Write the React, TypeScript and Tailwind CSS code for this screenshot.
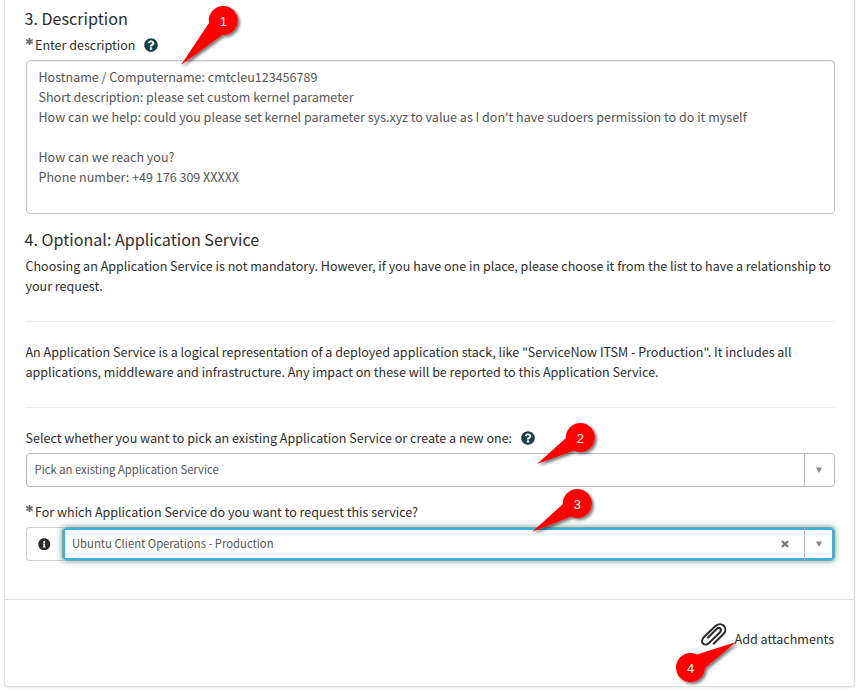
import React from "react";
import { FaAsterisk, FaQuestionCircle, FaInfoCircle } from "react-icons/fa";

function Required() {
  return <FaAsterisk className="-mt-[7px] mr-[2px] size-[7px] shrink-0 stroke-[#666] stroke-[40px] text-[#666]" />;
}

function Help() {
  return <FaQuestionCircle className="-mt-px ml-[8.5px] size-[14px] text-[#17414a]" />;
}

function Caret() {
  return (
    <svg className="-ml-px h-[6px] w-[6px]" viewBox="0 0 6 6">
      <path d="M0 0.5H6L3.4 5.5H2.6Z" fill="#888" />
    </svg>
  );
}

type CalloutProps = { n: string; cx: number; cy: number; tip: string };

function Callout({ n, cx, cy, tip }: CalloutProps) {
  return (
    <g>
      <g filter="url(#shadow)" fill="#fe0000">
        <circle cx={cx} cy={cy} r="14.5" />
        <path d={tip} />
      </g>
      <text x={cx} y={cy + 5} textAnchor="middle" fill="#fff" fontSize="13">
        {n}
      </text>
    </g>
  );
}

export default function App() {
  return (
    <div className="relative h-[692px] w-[865px] overflow-hidden bg-white pl-[4px] font-['Noto_Sans_CJK_SC',sans-serif] text-[12.54px] leading-[20px] text-[#2e2e2e]">
      <main className="flex h-[687px] w-[851px] flex-col rounded-b-[4px] border border-t-0 border-[#ddd] shadow-[0_1px_2px_rgba(0,0,0,0.08)]">
        <section className="flex h-[599px] flex-col pl-[21px] pr-[19px]">
          <h2 className="-ml-[1.5px] mt-[7px] h-[22px] text-[16.11px] leading-[22px]">3. Description</h2>
          <div className="mt-[6px] flex h-[20px] items-center whitespace-nowrap">
            <Required />
            <label>Enter description</label>
            <Help />
          </div>
          <div className="mt-[5px] h-[154px] whitespace-pre rounded-[4px] border border-[#c6c6c6] px-[11.5px] py-[6px] text-[#555] shadow-[inset_0_1px_1px_rgba(0,0,0,0.075)]">
            <p>Hostname / Computername: cmtcleu123456789</p>
            <p>Short description: please set custom kernel parameter</p>
            <p>How can we help: could you please set kernel parameter sys.xyz to value as I don't have sudoers permission to do it myself</p>
            <p className="mt-[20px]">How can we reach you?</p>
            <p>Phone number: +49 176 309 XXXXX</p>
          </div>
          <h2 className="-ml-[1.5px] mt-[14px] h-[22px] text-[16.11px] leading-[22px]">4. Optional: Application Service</h2>
          <div className="-ml-[0.5px] mt-[6px] whitespace-nowrap">
            <p>Choosing an Application Service is not mandatory. However, if you have one in place, please choose it from the list to have a relationship to</p>
            <p>your request.</p>
          </div>
          <hr className="mt-[25px] border-[#eee]" />
          <div className="-ml-[0.5px] mt-[20px] whitespace-nowrap">
            <p>An Application Service is a logical representation of a deployed application stack, like "ServiceNow ITSM - Production". It includes all</p>
            <p>applications, middleware and infrastructure. Any impact on these will be reported to this Application Service.</p>
          </div>
          <hr className="mt-[25px] border-[#eee]" />
          <div className="-ml-[0.5px] mt-[20px] flex h-[20px] items-center whitespace-nowrap">
            <label>Select whether you want to pick an existing Application Service or create a new one:</label>
            <Help />
          </div>
          <div className="mt-[5px] flex h-[34px] rounded-[4px] border border-[#b9b9be] text-[11.27px] text-[#555]">
            <span className="flex flex-1 items-center pb-[2px] pl-[7.5px]">Pick an existing Application Service</span>
            <span className="flex w-[30px] items-center justify-center border-l border-[#b9b9be]"><Caret /></span>
          </div>
          <div className="mt-[15px] flex h-[20px] items-center whitespace-nowrap">
            <Required />
            <label>For which Application Service do you want to request this service?</label>
          </div>
          <div className="mt-[5px] flex h-[34px] text-[11.27px] text-[#555]">
            <span className="flex w-[37px] items-center justify-center rounded-l-[4px] border border-r-0 border-[#ccc]">
              <FaInfoCircle className="-ml-px size-[12.5px] text-[#2b2b2b]" />
            </span>
            <div className="-ml-px flex flex-1 rounded-[4px] border border-[#7aa9a6] bg-white shadow-[inset_0_0_0_2px_#3daee9,0_0_6px_rgba(23,110,90,0.65)]">
              <span className="flex flex-1 items-center pb-[2px] pl-[9px]">Ubuntu Client Operations - Production</span>
              <svg className="mr-[15px] mt-[12px] size-[8px]" viewBox="0 0 8 8">
                <path d="M1 1L7 7M7 1L1 7" stroke="#777" strokeWidth="2.3" />
              </svg>
              <span className="flex w-[30px] items-center justify-center border-l border-[#b9b9be]"><Caret /></span>
            </div>
          </div>
        </section>
        <footer className="flex h-[87px] justify-end border-t border-[#ddd] pr-[20px]">
          <svg className="mt-[22px] h-[26px] w-[28px]" viewBox="700 622 28 26" fill="none" stroke="#2b2b2b" strokeWidth="2" strokeLinecap="butt" strokeLinejoin="round">
            <path d="M713.2 644.3L723.2 634.3C729 628.3 721.8 620.3 715.2 626.2L704 637C698.8 642.2 704.8 647.2 709.3 642.8L719.8 632.5C722.7 629.2 719.3 626.5 716.6 629L707.3 638.3" />
          </svg>
          <span className="ml-[7px] mt-[29px]">Add attachments</span>
        </footer>
      </main>
      <svg className="pointer-events-none absolute left-0 top-0 h-[692px] w-[865px] font-['Liberation_Sans',sans-serif]" viewBox="0 0 865 692">
        <defs>
          <filter id="shadow" x="-20%" y="-20%" width="150%" height="150%">
            <feDropShadow dx="2" dy="2" stdDeviation="1.6" floodColor="#000" floodOpacity="0.55" />
          </filter>
        </defs>
        <Callout n="1" cx={223.3} cy={20.5} tip="M181 65L209 23L222 35Z" />
        <Callout n="2" cx={580.3} cy={437.5} tip="M537 464L566 438L574 450.5Z" />
        <Callout n="3" cx={577.3} cy={503.5} tip="M532 532L563 504L571 516.5Z" />
        <Callout n="4" cx={690.5} cy={667.5} tip="M736 642L697 654.5L705 668Z" />
      </svg>
    </div>
  );
}
